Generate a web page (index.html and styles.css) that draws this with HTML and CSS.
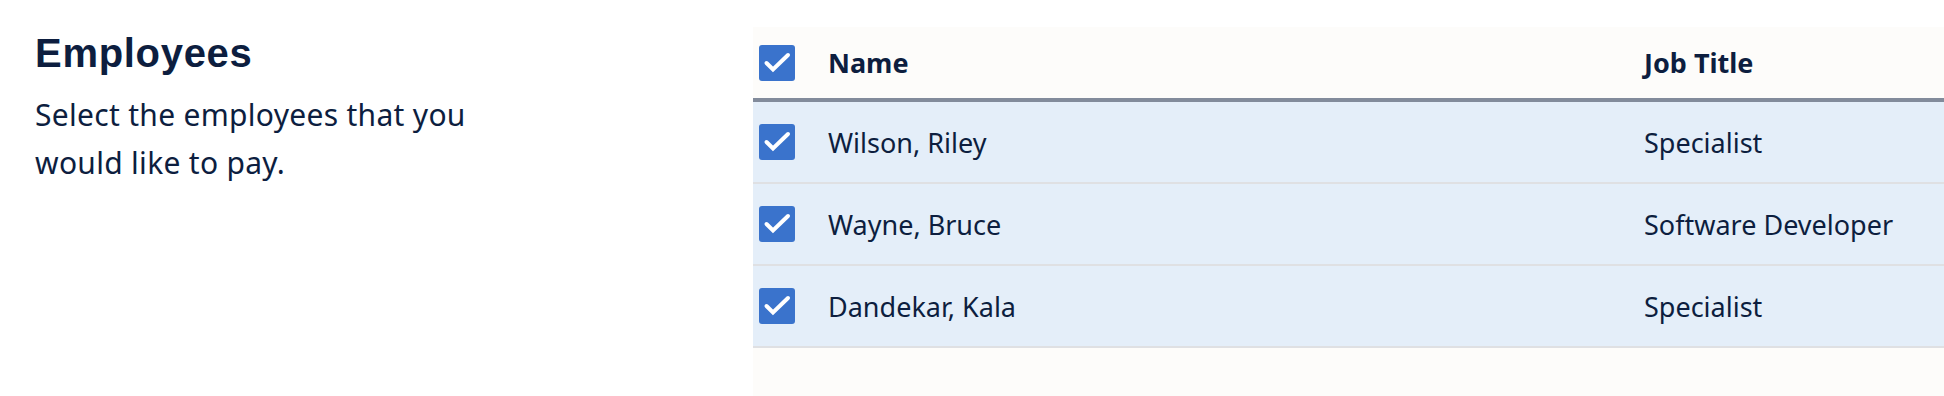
FILE: index.html
```html
<!DOCTYPE html>
<html lang="en">
<head>
  <meta charset="UTF-8">
  <meta name="viewport" content="width=device-width, initial-scale=1.0">
  <title>Employees</title>
  <link rel="stylesheet" href="styles.css">
</head>
<body>

  <div class="pagina">

    <!-- Intro -->
    <div class="intro">
      <h1 class="titulo">Employees</h1>
      <p class="descripcion">Select the employees that you would like to pay.</p>
    </div>

    <!-- Tabla de empleados -->
    <div class="tabla">
      <div class="fila cabecera">
        <div class="celda check">
          <svg width="36" height="36" viewBox="0 0 36 36"><rect width="36" height="36" rx="3" fill="#3a73cc"/><polyline points="7.5,18 14,24.5 29,10" fill="none" stroke="#fff" stroke-width="4" stroke-linecap="round"/></svg>
        </div>
        <div class="celda">Name</div>
        <div class="celda">Job Title</div>
      </div>

      <div class="fila">
        <div class="celda check">
          <svg width="36" height="36" viewBox="0 0 36 36"><rect width="36" height="36" rx="3" fill="#3a73cc"/><polyline points="7.5,18 14,24.5 29,10" fill="none" stroke="#fff" stroke-width="4" stroke-linecap="round"/></svg>
        </div>
        <div class="celda">Wilson, Riley</div>
        <div class="celda">Specialist</div>
      </div>

      <div class="fila">
        <div class="celda check">
          <svg width="36" height="36" viewBox="0 0 36 36"><rect width="36" height="36" rx="3" fill="#3a73cc"/><polyline points="7.5,18 14,24.5 29,10" fill="none" stroke="#fff" stroke-width="4" stroke-linecap="round"/></svg>
        </div>
        <div class="celda">Wayne, Bruce</div>
        <div class="celda">Software Developer</div>
      </div>

      <div class="fila">
        <div class="celda check">
          <svg width="36" height="36" viewBox="0 0 36 36"><rect width="36" height="36" rx="3" fill="#3a73cc"/><polyline points="7.5,18 14,24.5 29,10" fill="none" stroke="#fff" stroke-width="4" stroke-linecap="round"/></svg>
        </div>
        <div class="celda">Dandekar, Kala</div>
        <div class="celda">Specialist</div>
      </div>
    </div>

  </div>

</body>
</html>
```

FILE: styles.css
```css
/* Estilos generales */
body, html {
  margin: 0;
  padding: 0;
  height: 100vh;
  overflow: hidden;
  background-color: #ffffff;
  color: #0d1e3f;
  font-family: "Noto Sans", "Open Sans", sans-serif;
}

.pagina {
  display: flex;
  height: 100%;
}

/* Columna izquierda */
.intro {
  width: 753px;
  padding: 29px 0 0 35px;
  box-sizing: border-box;
  flex-shrink: 0;
}

.titulo {
  margin: 0;
  font-family: "Liberation Sans", Arial, sans-serif;
  font-size: 40px;
  line-height: 48px;
  font-weight: bold;
  letter-spacing: 0.7px;
}

.descripcion {
  margin: 14px 0 0 0;
  max-width: 490px;
  font-size: 30px;
  line-height: 48px;
  letter-spacing: 0.3px;
}

/* Tabla */
.tabla {
  flex: 1;
  margin-top: 27px;
  background-color: #fdfcfa;
}

.fila {
  display: grid;
  grid-template-columns: 75px 816px 1fr;
  height: 80px;
  background-color: #e4eef9;
  border-bottom: 2px solid #dfe0e3;
  font-size: 27px;
}

.fila.cabecera {
  height: 71px;
  background-color: #fdfcfa;
  border-bottom: 4px solid #828b9b;
  font-weight: bold;
}

.celda {
  display: flex;
  align-items: center;
  white-space: nowrap;
}

.celda.check {
  padding-left: 6px;
}

.celda svg {
  display: block;
}
```
